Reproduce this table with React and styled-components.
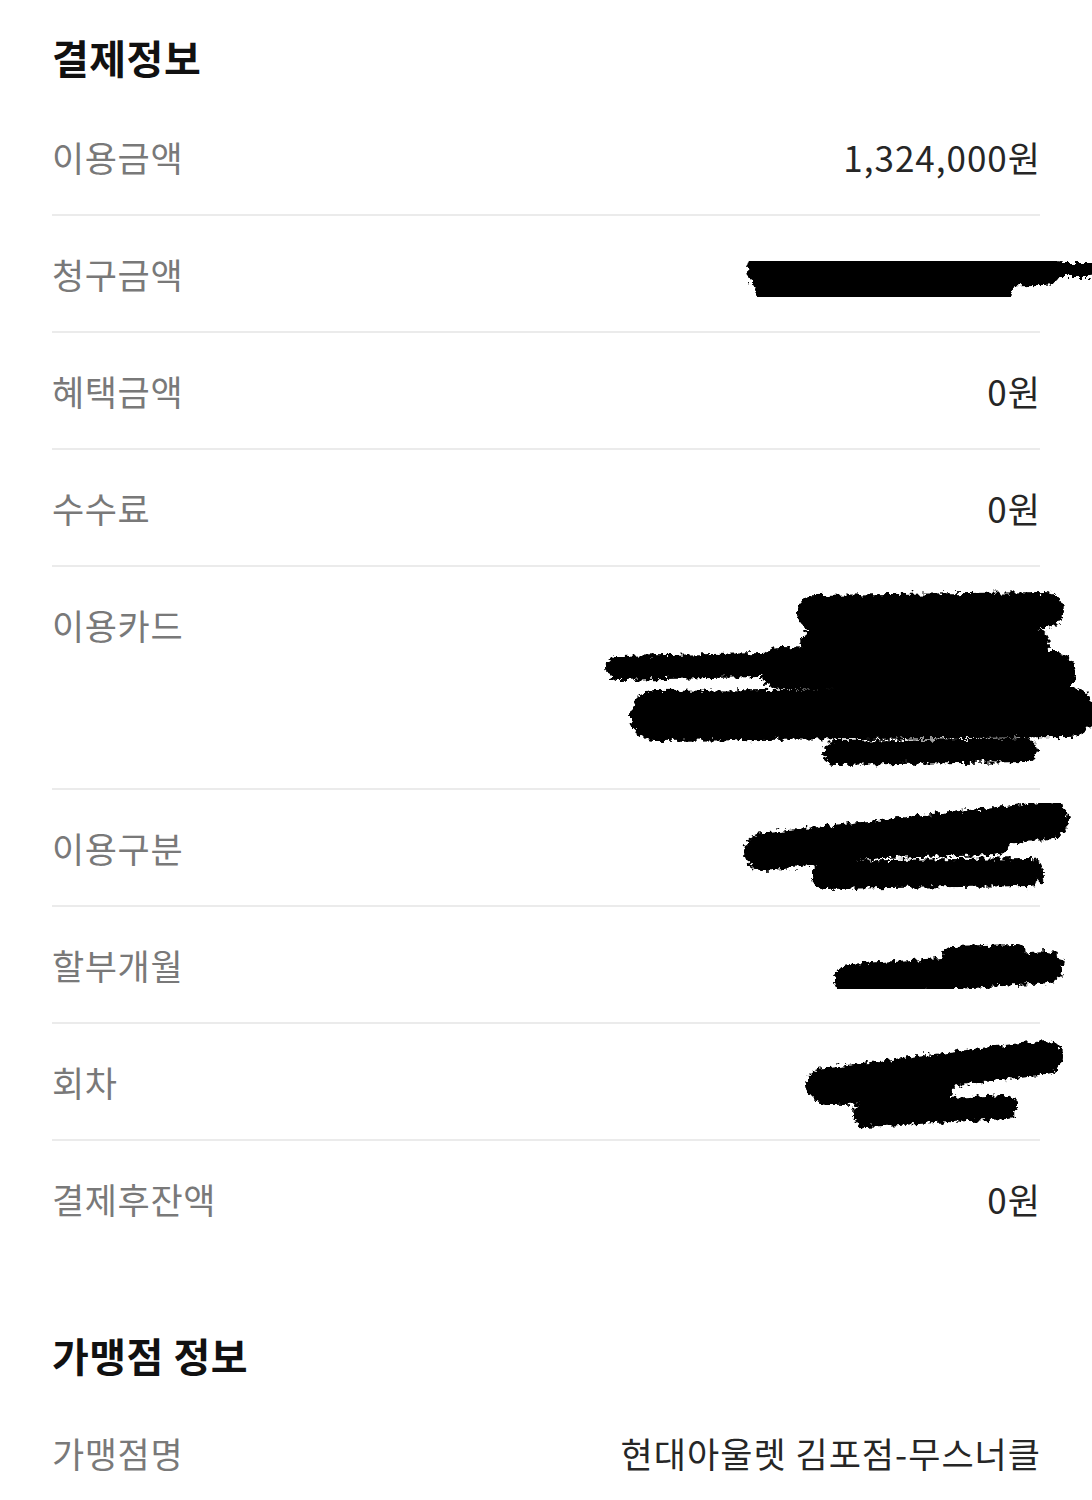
import React, { useId } from 'react';
import styled, { createGlobalStyle } from 'styled-components';

const GlobalStyle = createGlobalStyle`
  html, body {
    margin: 0;
    padding: 0;
    background: #ffffff;
  }
  body {
    font-family: "Noto Sans CJK KR", "Noto Sans", sans-serif;
  }
`;

const Page = styled.div`
  width: 1092px;
  box-sizing: border-box;
  padding: 33px 52px 40px;
  overflow: hidden;
`;

const Title = styled.h2`
  margin: ${(p) => (p.$first ? '0 0 18px' : '75px 0 16px')};
  font-size: 40px;
  line-height: 48px;
  font-weight: 700;
  color: #111111;
  letter-spacing: 0.5px;
`;

const Row = styled.div`
  display: flex;
  justify-content: space-between;
  align-items: flex-start;
  height: ${(p) => (p.$tall ? '221px' : '115px')};
  border-bottom: ${(p) => (p.$last ? 'none' : '2px solid #ebebeb')};
  line-height: 115px;
`;

const Label = styled.span`
  font-size: 35px;
  letter-spacing: 0.6px;
  color: #797979;
  white-space: nowrap;
`;

const Value = styled.span`
  font-size: 35px;
  letter-spacing: 1px;
  margin-right: -1px;
  color: #262626;
  white-space: nowrap;
`;

const ScribbleBox = styled.svg`
  display: block;
  flex-shrink: 0;
  margin-top: ${(p) => p.$top}px;
  margin-right: ${(p) => -p.$over}px;
  overflow: visible;
`;

function Scribble({ w, h, top, over, strokes }) {
  const id = useId().replace(/:/g, '');
  return (
    <ScribbleBox width={w} height={h} viewBox={`0 0 ${w} ${h}`} $top={top} $over={over}>
      <defs>
        <filter id={`f${id}`} x="-10%" y="-30%" width="120%" height="160%">
          <feTurbulence type="fractalNoise" baseFrequency="0.2" numOctaves="3" seed="4" />
          <feDisplacementMap in="SourceGraphic" scale="10" xChannelSelector="R" yChannelSelector="G" />
          <feGaussianBlur stdDeviation="0.6" />
        </filter>
      </defs>
      <g filter={`url(#f${id})`} stroke="#050505" strokeLinecap="round" fill="none">
        {strokes.map((s, i) => (
          <line key={i} x1={s[0]} y1={s[1]} x2={s[2]} y2={s[3]} strokeWidth={s[4]} />
        ))}
      </g>
    </ScribbleBox>
  );
}

const payRows = [
  { label: '이용금액', value: '1,324,000원' },
  {
    label: '청구금액',
    scribble: {
      w: 347, h: 60, top: 32, over: 52,
      strokes: [[18, 22, 300, 20, 34], [24, 42, 255, 42, 26], [280, 22, 345, 22, 14]],
    },
  },
  { label: '혜택금액', value: '0원' },
  { label: '수수료', value: '0원' },
  {
    label: '이용카드',
    tall: true,
    scribble: {
      w: 492, h: 187, top: 21, over: 52,
      strokes: [
        [215, 25, 445, 22, 36],
        [18, 80, 200, 76, 24],
        [180, 80, 455, 85, 42],
        [220, 58, 430, 58, 40],
        [55, 128, 470, 124, 50],
        [400, 125, 488, 125, 20],
        [235, 165, 425, 162, 24],
      ],
    },
  },
  {
    label: '이용구분',
    scribble: {
      w: 325, h: 97, top: 10, over: 30,
      strokes: [[18, 52, 305, 20, 38], [80, 75, 285, 72, 28], [60, 45, 250, 40, 30]],
    },
  },
  {
    label: '할부개월',
    scribble: {
      w: 233, h: 70, top: 28, over: 25,
      strokes: [[18, 45, 215, 32, 32], [120, 20, 185, 18, 18]],
    },
  },
  {
    label: '회차',
    scribble: {
      w: 255, h: 100, top: 11, over: 20,
      strokes: [[18, 50, 240, 22, 34], [60, 80, 200, 72, 24], [22, 56, 135, 55, 28]],
    },
  },
  { label: '결제후잔액', value: '0원' },
];

export default function App() {
  return (
    <>
      <GlobalStyle />
      <Page>
        <Title $first>결제정보</Title>
        {payRows.map((r, i) => (
          <Row key={r.label} $tall={r.tall} $last={i === payRows.length - 1}>
            <Label>{r.label}</Label>
            {r.scribble ? <Scribble {...r.scribble} /> : <Value>{r.value}</Value>}
          </Row>
        ))}
        <Title>가맹점 정보</Title>
        <Row $last>
          <Label>가맹점명</Label>
          <Value>현대아울렛 김포점-무스너클</Value>
        </Row>
      </Page>
    </>
  );
}
